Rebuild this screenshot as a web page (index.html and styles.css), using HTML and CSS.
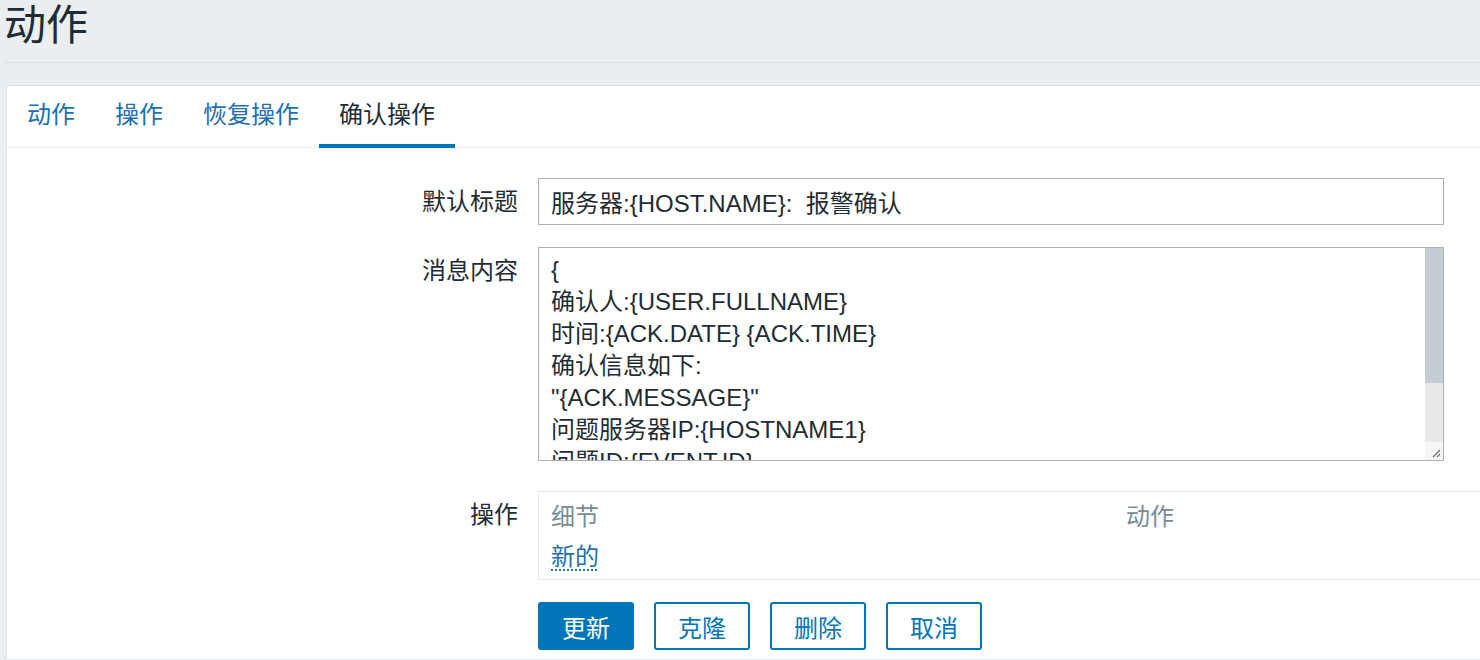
FILE: index.html
```html
<!DOCTYPE html>
<html lang="zh-CN">
<head>
<meta charset="utf-8">
<title>动作</title>
<link rel="stylesheet" href="styles.css">
</head>
<body>
<header class="page-header">
  <h1>动作</h1>
</header>
<main class="panel">
  <nav class="tabs">
    <a class="tab">动作</a>
    <a class="tab">操作</a>
    <a class="tab">恢复操作</a>
    <a class="tab active">确认操作</a>
  </nav>
  <form class="form">
    <label class="label">默认标题</label>
    <div class="field">
      <input class="input" type="text" value="服务器:{HOST.NAME}:  报警确认">
    </div>
    <label class="label">消息内容</label>
    <div class="field field-ta">
      <div class="ta-wrap">
        <textarea class="textarea">{
确认人:{USER.FULLNAME}
时间:{ACK.DATE} {ACK.TIME}
确认信息如下:
"{ACK.MESSAGE}"
问题服务器IP:{HOSTNAME1}
问题ID:{EVENT.ID}
当前的问题是: {TRIGGER.NAME}
}</textarea>
        <div class="scrollbar" aria-hidden="true">
          <div class="sb-thumb"></div>
          <div class="sb-track"></div>
          <div class="sb-corner">
            <svg width="18" height="18" viewBox="0 0 18 18"><path d="M15 8 L8 15 M15 12 L12 15" stroke="#6f6f6f" stroke-width="1.2" fill="none"/></svg>
          </div>
        </div>
      </div>
    </div>
    <label class="label">操作</label>
    <div class="field">
      <div class="ops">
        <span class="ops-head">细节</span>
        <span class="ops-head">动作</span>
        <a class="link">新的</a>
        <span></span>
      </div>
    </div>
    <span class="label"></span>
    <div class="field buttons">
      <button type="button" class="btn primary">更新</button>
      <button type="button" class="btn">克隆</button>
      <button type="button" class="btn">删除</button>
      <button type="button" class="btn">取消</button>
    </div>
  </form>
</main>
</body>
</html>
```

FILE: styles.css
```css
html, body {
  margin: 0;
  padding: 0;
}
body {
  width: 1480px;
  height: 660px;
  overflow: hidden;
  background: #ebeef0;
  font-family: "Liberation Sans", "Noto Sans CJK SC", sans-serif;
  font-size: 24px;
  color: #1f2c33;
}
.page-header {
  height: 62px;
  margin-left: 4px;
  border-bottom: 1px solid #dcdfe2;
}
.page-header h1 {
  margin: 0;
  font-size: 42px;
  line-height: 52px;
  font-weight: normal;
}
.panel {
  display: block;
  margin: 22px 0 0 6px;
  width: 1540px;
  background: #fff;
  border: 1px solid #dfe4e7;
  border-right: none;
  border-bottom: none;
  padding-bottom: 9px;
}
.tabs {
  display: flex;
  height: 61px;
  border-bottom: 1px solid #ebeef0;
}
.tab {
  padding: 0 20px;
  line-height: 58px;
  height: 58px;
  border-bottom: 4px solid transparent;
  color: #1e6fae;
  cursor: pointer;
}
.tab.active {
  color: #1f2c33;
  border-bottom-color: #0275b8;
}
.form {
  display: grid;
  grid-template-columns: 511px 1fr;
  column-gap: 20px;
  padding-top: 30px;
}
.label {
  text-align: right;
  line-height: 47px;
  height: 47px;
}
.field {
  margin-bottom: 22px;
}
.field-ta {
  margin-bottom: 30px;
}
.input {
  display: block;
  box-sizing: border-box;
  width: 906px;
  height: 47px;
  margin: 0;
  padding: 0 12px;
  border: 1px solid #acb0b3;
  border-radius: 0;
  font: inherit;
  color: #1f2c33;
  outline: none;
}
.ta-wrap {
  position: relative;
  width: 906px;
  height: 214px;
}
.textarea {
  display: block;
  box-sizing: border-box;
  width: 906px;
  height: 214px;
  margin: 0;
  padding: 6px 20px 0 12px;
  border: 1px solid #acb0b3;
  border-radius: 0;
  font: inherit;
  line-height: 32px;
  color: #1f2c33;
  outline: none;
  resize: none;
  overflow: hidden;
}
.scrollbar {
  position: absolute;
  top: 1px;
  right: 1px;
  bottom: 1px;
  width: 18px;
  display: flex;
  flex-direction: column;
}
.sb-thumb {
  height: 135px;
  background: #c5ccd3;
}
.sb-track {
  flex: 1;
  background: #e9e9e9;
}
.sb-corner {
  height: 18px;
  background: #f6f6f6;
}
.sb-corner svg {
  display: block;
}
.ops {
  display: grid;
  grid-template-columns: 575px 1fr;
  box-sizing: border-box;
  height: 89px;
  padding: 8px 12px 0;
  border: 1px solid #e6e9eb;
  border-right: none;
  line-height: 34px;
}
.ops-head {
  color: #768d99;
}
.link {
  justify-self: start;
  color: #1e6fae;
  text-decoration: underline dotted #1e6fae;
  text-decoration-thickness: 2px;
  text-underline-offset: 5px;
  cursor: pointer;
}
.buttons {
  display: flex;
  gap: 20px;
  margin-bottom: 0;
}
.btn {
  box-sizing: border-box;
  width: 96px;
  height: 48px;
  margin: 0;
  padding: 0;
  border: 2px solid #0275b8;
  border-radius: 3px;
  background: #fff;
  color: #0275b8;
  font: inherit;
  cursor: pointer;
}
.btn.primary {
  background: #0275b8;
  color: #fff;
}
```
